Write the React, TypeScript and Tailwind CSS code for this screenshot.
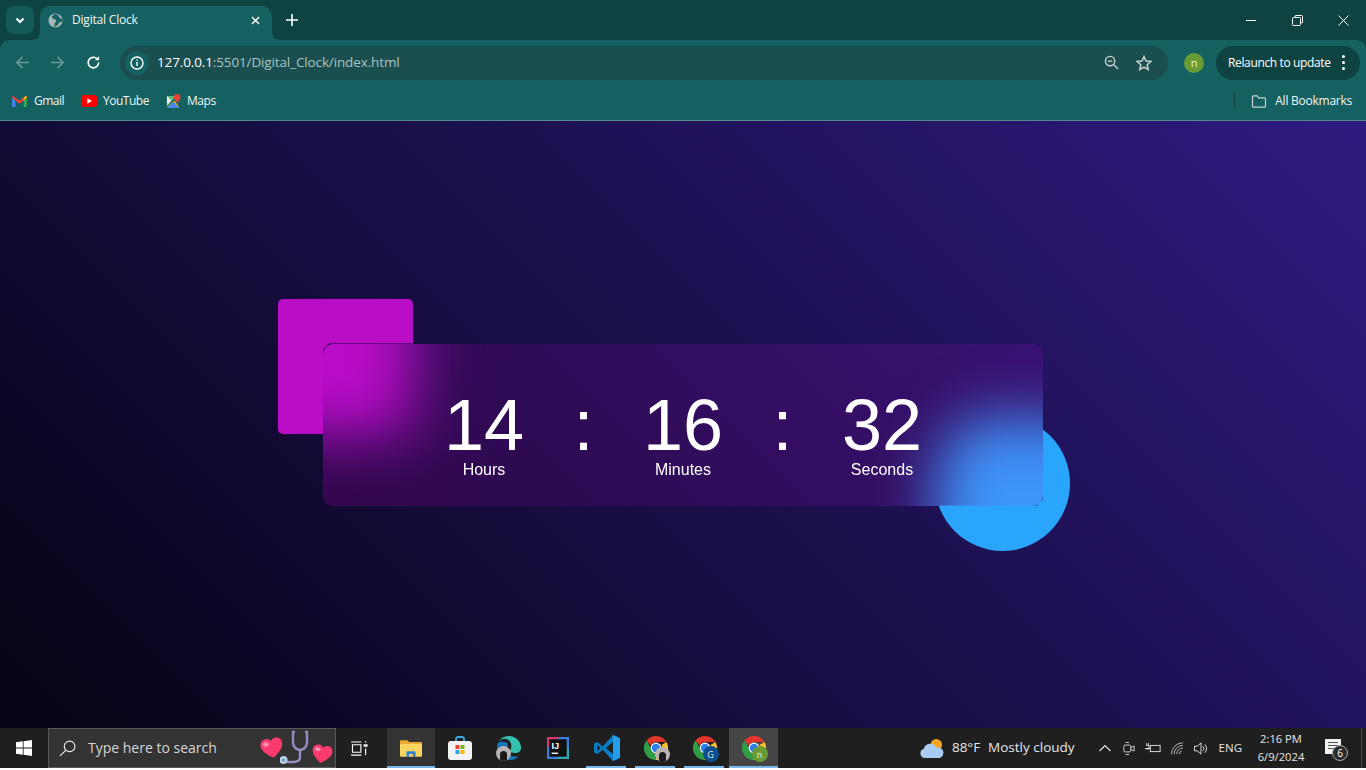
import React from 'react';

function Heart({ className }: { className: string }) {
  return (
    <svg viewBox="0 0 24 22" className={className}>
      <path d="M12 21C5 16 1 12 1 7a6 6 0 0 1 11-3 6 6 0 0 1 11 3c0 5-4 9-11 14z" fill="#fb3a6d" />
      <ellipse cx="6.5" cy="6.5" rx="3" ry="2.2" fill="#ff8fb0" />
    </svg>
  );
}

function Chrome({ badge }: { badge?: React.ReactNode }) {
  return (
    <div className="relative w-6 h-6">
      <svg viewBox="0 0 24 24" className="w-6 h-6">
        <path d="M12 0a12 12 0 0 1 10.4 6H12a6 6 0 0 0-5.5 3.5L2.6 4.5A12 12 0 0 1 12 0z" fill="#e5352b" />
        <path d="M22.4 6A12 12 0 0 1 11 24l5.2-8.5A6 6 0 0 0 17.5 9L22.4 6z" fill="#fbc02d" />
        <path d="M2.6 4.5l4 7a6 6 0 0 0 7.5 6.2L11 24A12 12 0 0 1 2.6 4.5z" fill="#2f9e44" />
        <circle cx="12" cy="12" r="5.4" fill="#fff" />
        <circle cx="12" cy="12" r="4.2" fill="#2f80ed" />
      </svg>
      {badge}
    </div>
  );
}

function PhotoBadge({ className }: { className: string }) {
  return (
    <div className={`absolute rounded-full overflow-hidden bg-[#b9b4b2] ${className}`}>
      <div className="absolute left-[4px] top-[5px] w-[7px] h-[10px] rounded-t-full bg-[#1b1b1b]" />
    </div>
  );
}

function TaskItem({ underline, active, wide, children }: { underline?: boolean; active?: boolean; wide?: boolean; children: React.ReactNode }) {
  return (
    <div className={`relative w-[49px] h-full flex items-center justify-center ${active ? 'bg-[#454545]' : ''}`}>
      {children}
      {underline && <div className={`absolute bottom-0 h-[2px] bg-[#76b9ed] ${wide ? 'left-0 right-0' : 'left-[4px] right-[5px]'}`} />}
    </div>
  );
}

function TimeBlock({ value, label }: { value: string; label: string }) {
  return (
    <div className="w-[84px] flex flex-col items-center">
      <div className="h-[75px] text-[72px] leading-[75px]">{value}</div>
      <div className="text-[16px] leading-[14px]">{label}</div>
    </div>
  );
}

export default function App() {
  return (
    <div className="w-full h-[770px] flex flex-col overflow-hidden bg-white font-['Open_Sans','Noto_Sans',sans-serif]">
      {/* Title bar */}
      <div className="h-[40px] shrink-0 bg-[#0f4341] flex items-start text-white">
        <div className="ml-[6px] mt-[6px] w-[28px] h-[28px] rounded-lg bg-[#145a58] flex items-center justify-center">
          <svg viewBox="0 0 12 12" className="w-[12px] h-[12px]" fill="none" stroke="#fff" strokeWidth="2">
            <path d="M2.5 4.5 6 8l3.5-3.5" />
          </svg>
        </div>
        <div className="relative ml-[6px] mt-[6px] w-[232px] h-[34px] rounded-t-[10px] bg-[#156060] flex items-center pl-[8px] pr-[8px] pb-[6px]">
          <svg viewBox="0 0 16 16" className="absolute -left-[8px] bottom-0 w-[8px] h-[8px]" preserveAspectRatio="none">
            <path d="M16 0v16H0A16 16 0 0 0 16 0z" fill="#156060" />
          </svg>
          <svg viewBox="0 0 16 16" className="absolute -right-[8px] bottom-0 w-[8px] h-[8px]" preserveAspectRatio="none">
            <path d="M0 0v16h16A16 16 0 0 1 0 0z" fill="#156060" />
          </svg>
          <svg viewBox="0 0 16 16" className="w-[15px] h-[15px]">
            <circle cx="8" cy="8" r="7.5" fill="#a3b7b6" />
            <path d="M7 1 4 4l1 2 3 1 1 2-2 2 0 4 3-2 2-3 3-1V6l-3-1-1-3z" fill="#156060" />
          </svg>
          <span className="ml-[9px] text-[12px] leading-none tracking-[-0.2px] flex-1 text-[#f0f5f5]">Digital Clock</span>
          <svg viewBox="0 0 10 10" className="w-[9px] h-[9px] mr-[4px]" stroke="#fff" strokeWidth="1.6">
            <path d="M1 1l8 8M9 1l-8 8" />
          </svg>
        </div>
        <svg viewBox="0 0 12 12" className="ml-[14px] mt-[14px] w-[12px] h-[12px]" stroke="#fff" strokeWidth="1.6">
          <path d="M6 0v12M0 6h12" />
        </svg>
        <div className="ml-auto h-[40px] flex items-center">
          <div className="w-[46px] flex justify-center">
            <div className="w-[10px] h-[1px] bg-white" />
          </div>
          <div className="w-[46px] flex justify-center">
            <svg viewBox="0 0 11 11" className="w-[11px] h-[11px]" fill="none" stroke="#fff">
              <rect x="0.5" y="2.5" width="8" height="8" rx="1" />
              <path d="M3 2.5V1.5a1 1 0 0 1 1-1h5.500a1 1 0 0 1 1 1V7a1 1 0 0 1-1 1H8.500" />
            </svg>
          </div>
          <div className="w-[46px] flex justify-center">
            <svg viewBox="0 0 11 11" className="w-[11px] h-[11px]" stroke="#fff">
              <path d="M0.500 0.500l10 10M10.500 0.500l-10 10" />
            </svg>
          </div>
        </div>
      </div>

      {/* Toolbar and bookmarks */}
      <div className="shrink-0 bg-[#0f4341]">
        <div className="h-[45px] bg-[#156060] rounded-t-[9px] flex items-center text-white">
          <div className="w-[120px] shrink-0 flex items-center">
            <svg viewBox="0 0 16 16" className="ml-[15px] w-[15px] h-[15px]" fill="none" stroke="#6f9c9b" strokeWidth="1.6">
              <path d="M15 8H2M8 2 2 8l6 6" />
            </svg>
            <svg viewBox="0 0 16 16" className="ml-[20px] w-[15px] h-[15px]" fill="none" stroke="#6f9c9b" strokeWidth="1.6">
              <path d="M1 8h13M8 2l6 6-6 6" />
            </svg>
            <svg viewBox="0 0 16 16" className="ml-[21px] w-[15px] h-[15px]" fill="none" stroke="#fff" strokeWidth="1.8">
              <path d="M13.500 8A5.600 5.600 0 1 1 11.800 4" />
              <path d="M14 1v4.500H9.500" fill="#fff" stroke="none" />
            </svg>
          </div>
          <div className="w-[1048px] h-[34px] rounded-full bg-[#1b4f4f] flex items-center">
            <div className="ml-[5px] w-[24px] h-[24px] rounded-full bg-[#156060] flex items-center justify-center">
              <svg viewBox="0 0 14 14" className="w-[14px] h-[14px]" fill="none" stroke="#fff" strokeWidth="1.400">
                <circle cx="7" cy="7" r="6" />
                <path d="M7 6v4M7 3.500v1.300" />
              </svg>
            </div>
            <span className="ml-[8px] text-[13.5px] leading-none tracking-[-0.13px] text-white">
              127.0.0.1<span className="text-[#a8c3c2]">:5501/Digital_Clock/index.html</span>
            </span>
            <svg viewBox="0 0 16 16" className="ml-auto w-[15px] h-[15px]" fill="none" stroke="#c3d3d2" strokeWidth="1.500">
              <circle cx="6.500" cy="6.500" r="5" />
              <path d="M4 6.500h5M10.500 10.500 15 15" />
            </svg>
            <svg viewBox="0 0 16 16" className="ml-[17px] mr-[16px] w-[16px] h-[16px]" fill="none" stroke="#c3d3d2" strokeWidth="1.500">
              <path d="M8 1.500l2 4.500 4.800.5-3.600 3.200 1 4.800L8 12l-4.200 2.500 1-4.800L1.200 6.500 6 6z" />
            </svg>
          </div>
          <div className="ml-[16px] w-[20px] h-[20px] rounded-full bg-[#6a9c36] flex items-center justify-center text-[11px] leading-none text-[#e8f0dc]">n</div>
          <div className="ml-[12px] w-[144px] h-[34px] rounded-full bg-[#0f4341] flex items-center pl-[12px]">
            <span className="text-[12px] leading-none tracking-[-0.36px] whitespace-nowrap">Relaunch to update</span>
            <div className="ml-[11px] flex flex-col gap-[3px]">
              <div className="w-[3px] h-[3px] rounded-full bg-white" />
              <div className="w-[3px] h-[3px] rounded-full bg-white" />
              <div className="w-[3px] h-[3px] rounded-full bg-white" />
            </div>
          </div>
        </div>

        <div className="h-[36px] bg-[#156060] border-b border-[#4f8c89] pb-[3px] flex items-center text-[12px] text-[#f0f5f5] leading-none">
          <svg viewBox="0 0 16 12" className="ml-[12px] w-[15px] h-[11px]">
            <path d="M0 1.500v9.500a1 1 0 0 0 1 1h2.500V5z" fill="#4285f4" />
            <path d="M16 1.500v9.500a1 1 0 0 1-1 1h-2.500V5z" fill="#34a853" />
            <path d="M3.500 5 0 2V1a1 1 0 0 1 1.700-.6L8 5.200l6.300-4.800A1 1 0 0 1 16 1v1l-3.500 3L8 8.500z" fill="#ea4335" />
            <path d="M12.500 5 16 2V1a1 1 0 0 0-1.700-.6L12.500 1.800z" fill="#fbbc04" />
          </svg>
          <span className="ml-[7px] tracking-[-0.5px]">Gmail</span>
          <svg viewBox="0 0 16 12" className="ml-[17px] w-[16px] h-[12px]">
            <rect width="16" height="12" rx="3" fill="#f00" />
            <path d="M6.300 3.200v5.600L11 6z" fill="#fff" />
          </svg>
          <span className="ml-[6px] tracking-[-0.5px]">YouTube</span>
          <svg viewBox="0 0 16 16" className="ml-[17px] w-[15px] h-[15px]">
            <path d="M1 2h10L1 13z" fill="#5bb974" />
            <path d="M1 14 9 7l5 7z" fill="#fbbc04" />
            <path d="M1 15 8 8l6 7z" fill="#4285f4" />
            <path d="M1 2l5 5-5 5z" fill="#e8eaed" />
            <path d="M12 0a3.500 3.500 0 0 1 3.500 3.500C15.500 6 12 9 12 9S8.500 6 8.500 3.500A3.500 3.500 0 0 1 12 0z" fill="#ea4335" />
          </svg>
          <span className="ml-[6px] tracking-[-0.4px]">Maps</span>
          <div className="ml-auto w-[1px] h-[16px] bg-[#0f4341]" />
          <svg viewBox="0 0 16 14" className="ml-[16px] w-[16px] h-[13px]" fill="none" stroke="#c3d3d2" strokeWidth="1.300">
            <path d="M1 2a1 1 0 0 1 1-1h4l1.500 2H14a1 1 0 0 1 1 1v8a1 1 0 0 1-1 1H2a1 1 0 0 1-1-1z" />
          </svg>
          <span className="ml-[8px] mr-[14px] tracking-[-0.25px]">All Bookmarks</span>
        </div>
      </div>

      {/* Page */}
      <div className="flex-1 min-h-0 bg-[linear-gradient(45deg,#060314,#2f1a80)] flex items-center justify-center text-white font-['Liberation_Sans',Arial,sans-serif]">
        <div className="relative w-[720px] h-[162px]">
          {/* sharp shapes, cut away where the card sits */}
          <div className="absolute -left-[45px] -top-[45px] w-[135px] h-[135px] rounded-[5px] bg-[#ba0ec6] [clip-path:polygon(-2px_-2px,137px_-2px,137px_45px,51px_45px,45px_51px,45px_137px,-2px_137px)]" />
          <div className="absolute -right-[27px] -bottom-[45px] w-[135px] h-[135px] rounded-full bg-[#29a6fb] [clip-path:polygon(108px_-2px,137px_-2px,137px_137px,-2px_137px,-2px_90px,102px_90px,108px_84px)]" />
          {/* frosted card */}
          <div className="relative w-full h-full rounded-[10px] overflow-hidden">
            <div className="absolute inset-0 blur-[30px]">
              <div className="absolute -left-[90px] -top-[90px] w-[180px] h-[180px] bg-[#ae0fbf]" />
              <div className="absolute left-[612px] top-[72px] w-[135px] h-[135px] rounded-full bg-[#29a6fb]" />
              <div className="absolute left-[693px] top-[72px] w-[135px] h-[135px] rounded-full bg-[#29a6fb]" />
              <div className="absolute left-[612px] top-[117px] w-[135px] h-[135px] rounded-full bg-[#29a6fb]" />
              <div className="absolute left-[693px] top-[117px] w-[135px] h-[135px] rounded-full bg-[#29a6fb]" />
            </div>
            <div className="absolute inset-0 bg-[linear-gradient(90deg,#ff00ff26,#ff00ff1a_30%)]" />
            <div className="relative h-full pt-[44px] flex items-start justify-center gap-[47px]">
              <TimeBlock value="14" label="Hours" />
              <div className="w-[21px] h-[75px] text-center text-[72px] leading-[75px]">:</div>
              <TimeBlock value="16" label="Minutes" />
              <div className="w-[21px] h-[75px] text-center text-[72px] leading-[75px]">:</div>
              <TimeBlock value="32" label="Seconds" />
            </div>
          </div>
        </div>
      </div>

      {/* Taskbar */}
      <div className="h-[40px] shrink-0 bg-[#1f1f1f] flex items-center text-white mb-[2px]">
        <div className="w-[48px] h-full flex items-center justify-center">
          <svg viewBox="0 0 16 16" className="w-[16px] h-[16px]" fill="#fff">
            <path d="M0 2.300 6.800 1.300v6.300H0zM7.600 1.200 16 0v7.600H7.600zM0 8.400h6.800v6.300L0 13.700zM7.600 8.400H16V16l-8.400-1.200z" />
          </svg>
        </div>
        <div className="w-[288px] h-full bg-[#333] border border-[#5a5a5a] flex items-center relative">
          <svg viewBox="0 0 16 16" className="ml-[10px] w-[17px] h-[17px]" fill="none" stroke="#e8e8e8" strokeWidth="1.100">
            <circle cx="10" cy="6" r="5" />
            <path d="M6.300 9.700 1 15" />
          </svg>
          <span className="ml-[12px] text-[14px] leading-none text-[#d6d6d6]">Type here to search</span>
          <Heart className="absolute left-[211px] top-[8px] w-[24px] h-[22px] -rotate-[10deg]" />
          <svg viewBox="0 0 32 36" className="absolute left-[231px] top-[1px] w-[32px] h-[36px]" fill="none" stroke="#9a8bc0" strokeWidth="2.400">
            <path d="M15 2h-2v10c0 5 3.500 8 7 8s7-3 7-8V2h-2" />
            <path d="M20 20v7c0 4-3 5-7 5H7" />
            <circle cx="3.500" cy="30" r="2.800" stroke="#b9d4ea" fill="#6c92b8" />
          </svg>
          <Heart className="absolute left-[262px] top-[15px] w-[22px] h-[20px] rotate-[10deg]" />
        </div>
        <div className="w-[48px] mr-[3px] pr-[2px] h-full flex items-center justify-center">
          <svg viewBox="0 0 18 16" className="w-[17px] h-[15px]" fill="none" stroke="#fff" strokeWidth="1.200">
            <path d="M0 1h11M0 15h11M1.500 4h9v8h-9zM14 4h3v1.500h-3zM15.500 8v7M15.500 0v1.500" />
          </svg>
        </div>
        <div className="relative w-[48px] h-full bg-[#333] flex items-center justify-center">
          <svg viewBox="0 0 24 20" className="w-[22px] h-[19px]">
            <path d="M0 2a1 1 0 0 1 1-1h7l2 2h13a1 1 0 0 1 1 1v3H0z" fill="#e8a92e" />
            <path d="M0 5h24v13a1 1 0 0 1-1 1H1a1 1 0 0 1-1-1z" fill="#fcd462" />
            <path d="M7 19v-5a1 1 0 0 1 1-1h8a1 1 0 0 1 1 1v5h-3v-3h-4v3z" fill="#2f86c8" />
          </svg>
          <div className="absolute bottom-0 left-0 right-0 h-[2px] bg-[#76b9ed]" />
        </div>
        <TaskItem>
          <svg viewBox="0 0 24 24" className="w-[24px] h-[24px]">
            <path d="M8 6V3a2 2 0 0 1 2-2h4a2 2 0 0 1 2 2v3" fill="none" stroke="#38a6e0" strokeWidth="1.800" />
            <rect y="5" width="24" height="19" rx="3" fill="#f3f3f3" />
            <rect x="7.500" y="9" width="4" height="4" fill="#e8442e" />
            <rect x="12.500" y="9" width="4" height="4" fill="#7ab829" />
            <rect x="7.500" y="14" width="4" height="4" fill="#2da4e8" />
            <rect x="12.500" y="14" width="4" height="4" fill="#fbb900" />
          </svg>
        </TaskItem>
        <TaskItem>
          <div className="relative w-[24px] h-[24px]">
            <svg viewBox="0 0 24 24" className="w-[24px] h-[24px]">
              <path d="M12 0a12 12 0 0 1 12 12c0 3-2.500 5-6 5-3 0-5-1-5-2 0-.6.800-1 .800-2.500A6 6 0 0 0 1 7a12 12 0 0 1 11-7z" fill="#35c1b0" />
              <path d="M1 7a12 12 0 0 0 0 10 12 12 0 0 0 14 7c3-.5 5-2 6.500-4-3 1-9 1-10.500-4C9.500 10 13 7 8 6 5 5.500 2 6 1 7z" fill="#1673b8" />
            </svg>
            <PhotoBadge className="-left-[1px] bottom-[-1px] w-[15px] h-[15px]" />
          </div>
        </TaskItem>
        <TaskItem>
          <svg viewBox="0 0 24 24" className="w-[22px] h-[22px]">
            <rect width="24" height="24" fill="#3b7dd8" />
            <path d="M0 0h14L0 12z" fill="#fe2857" opacity="0.8" />
            <path d="M24 24H10l14-12z" fill="#21d789" opacity="0.5" />
            <rect x="2.500" y="2.500" width="19" height="19" fill="#111" />
            <rect x="5" y="17" width="7" height="1.500" fill="#fff" />
            <text x="5" y="13.500" fontSize="10" fontWeight="700" fill="#fff" fontFamily="Liberation Sans, sans-serif">IJ</text>
          </svg>
        </TaskItem>
        <TaskItem underline>
          <svg viewBox="0 0 24 24" className="w-[26px] h-[26px]">
            <path d="M17.500 0 24 3v18l-6.500 3L8 13.500 3 17.500 0 16V8l3-1.500 5 4z" fill="#0a7cc4" />
            <path d="M17.500 0 24 3v18l-6.500 3z" fill="#22a0ee" />
            <path d="M17.500 6.500v11L11 12z" fill="#1f1f1f" />
            <path d="M3 9v6l3-3z" fill="#1f1f1f" />
          </svg>
        </TaskItem>
        <TaskItem underline>
          <Chrome badge={<PhotoBadge className="-right-[2px] -bottom-[2px] w-[15px] h-[15px]" />} />
        </TaskItem>
        <TaskItem underline>
          <Chrome
            badge={
              <div className="absolute -right-[2px] -bottom-[2px] w-[16px] h-[16px] rounded-full bg-[#0b4f8c] flex items-center justify-center text-[9px] leading-none text-[#dfe9f2]">G</div>
            }
          />
        </TaskItem>
        <TaskItem underline active wide>
          <Chrome
            badge={
              <div className="absolute -right-[2px] -bottom-[2px] w-[16px] h-[16px] rounded-full bg-[#6a9c36] flex items-center justify-center text-[9px] leading-none text-[#e8f0dc]">n</div>
            }
          />
        </TaskItem>

        {/* Tray */}
        <div className="ml-auto h-full flex items-center">
          <svg viewBox="0 0 26 22" className="w-[25px] h-[21px]">
            <circle cx="17" cy="7" r="6" fill="#f5a623" />
            <path d="M5 21a5 5 0 0 1-1-9.800A7 7 0 0 1 17 10a5.500 5.500 0 0 1 3.500 11z" fill="#a9cdf2" />
          </svg>
          <span className="ml-[7px] text-[13.5px] leading-none text-[#e6e6e6]">88°F</span>
          <span className="ml-[8px] text-[13.5px] leading-none text-[#e6e6e6]">Mostly cloudy</span>
          <svg viewBox="0 0 12 8" className="ml-[24px] w-[12px] h-[8px]" fill="none" stroke="#e8e8e8" strokeWidth="1.100">
            <path d="M0.500 7 6 1.500 11.500 7" />
          </svg>
          <svg viewBox="0 0 14 16" className="ml-[12px] w-[12px] h-[15px]" fill="none" stroke="#e8e8e8">
            <rect x="1" y="4" width="8" height="8" rx="1.500" />
            <path d="M9 7l4-2v6l-4-2M3 1h4M3 15h4" />
          </svg>
          <svg viewBox="0 0 18 12" className="ml-[10px] w-[16px] h-[11px]" fill="none" stroke="#e8e8e8">
            <rect x="6" y="2.500" width="11" height="7" />
            <path d="M0 6h6M1.500 2.500h3v4h-3M2 0v2.500M4 0v2.500" />
          </svg>
          <svg viewBox="0 0 16 14" className="ml-[10px] w-[14px] h-[13px]" fill="none" stroke="#c8c8c8">
            <path d="M0.500 13.500a13 13 0 0 1 13-13M3.500 13.500a10 10 0 0 1 10-10M6.500 13.500a7 7 0 0 1 7-7M9.500 13.500a4 4 0 0 1 3-3.800" />
          </svg>
          <svg viewBox="0 0 16 14" className="ml-[8px] w-[16px] h-[13px]" fill="none" stroke="#e8e8e8">
            <path d="M1 4.500h3L8 1v12L4 9.500H1zM10 4.500a3.500 3.500 0 0 1 0 5M12 2.500a6 6 0 0 1 0 9" />
          </svg>
          <span className="ml-[10px] text-[11.5px] leading-none text-[#e6e6e6]">ENG</span>
          <div className="ml-[10px] w-[58px] flex flex-col items-center text-[11.2px] text-[#e6e6e6] leading-[18px] whitespace-nowrap">
            <span>2:16 PM</span>
            <span>6/9/2024</span>
          </div>
          <div className="relative ml-[15px] w-[16px] h-[15px] mr-[25px] -mt-[4px] bg-[#f2f2f2] flex flex-col justify-center gap-[2px] px-[3px] pb-[2px]">
            <div className="h-[1px] bg-[#555]" />
            <div className="h-[1px] bg-[#555]" />
            <div className="h-[1px] bg-[#555]" />
            <div className="absolute -right-[7px] -bottom-[7px] w-[16px] h-[16px] rounded-full bg-[#2c2c2c] border border-[#aaa] flex items-center justify-center text-[10px] leading-none text-white">6</div>
          </div>
          <div className="absolute right-[4px] w-[1px] h-[40px] bg-[#444]" />
        </div>
      </div>
    </div>
  );
}
